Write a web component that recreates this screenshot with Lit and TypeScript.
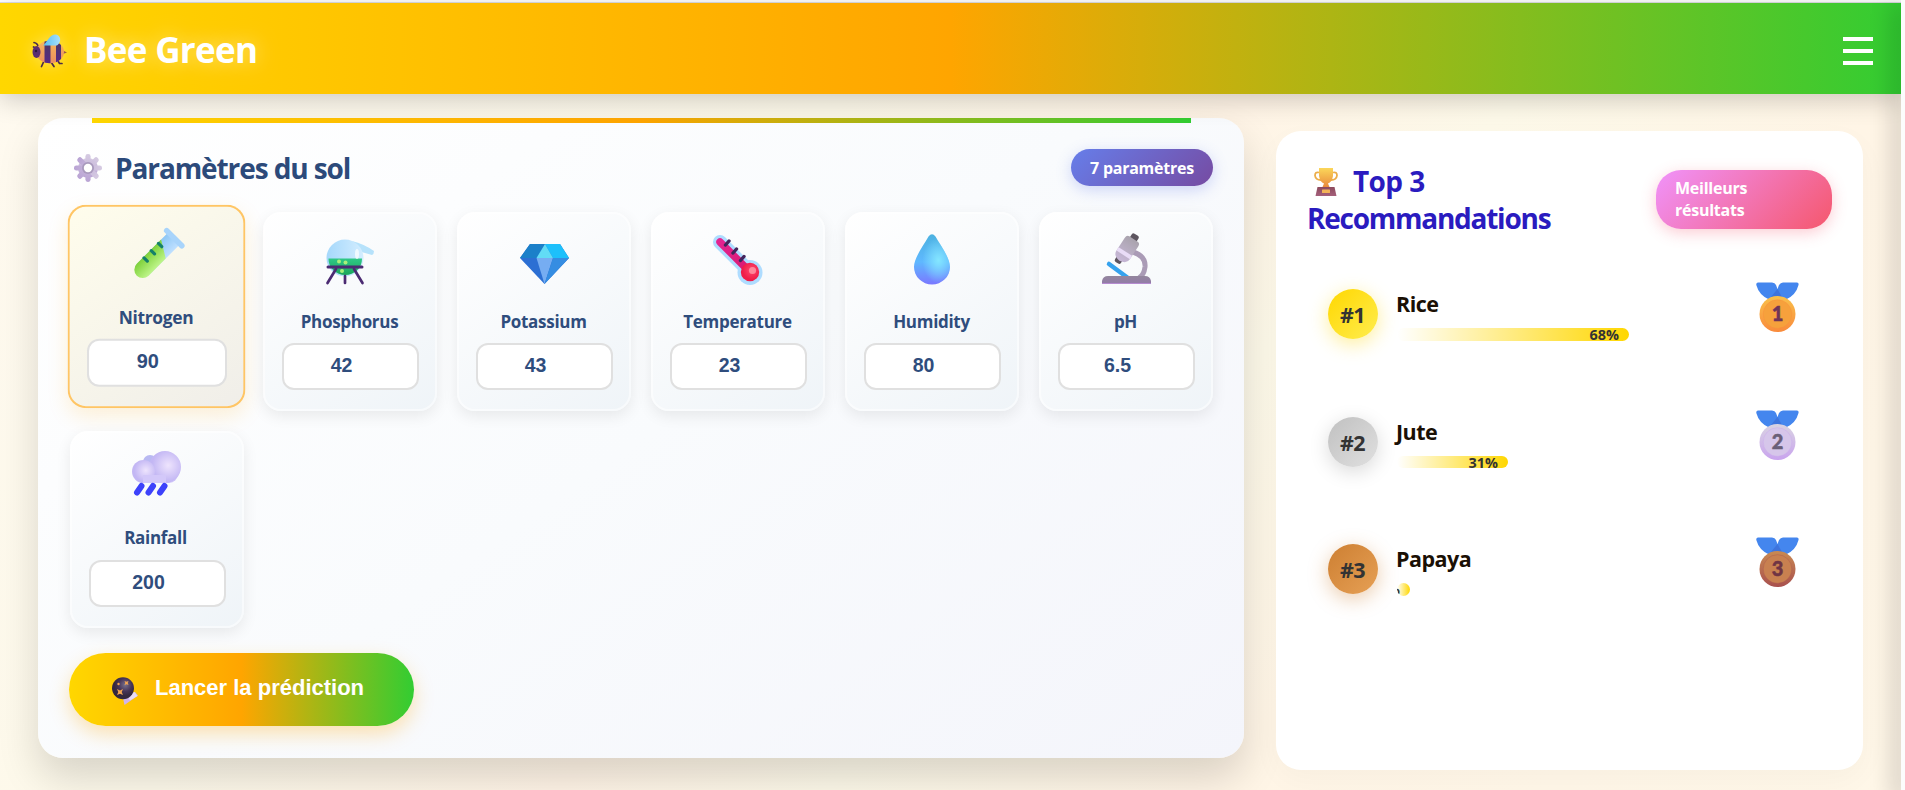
import { LitElement, html, svg, css } from "lit";
import { customElement } from "lit/decorators.js";

const lg = (id: string, a: string, b: string, x2 = 0, y2 = 1) =>
  svg`<linearGradient id=${id} x1="0" y1="0" x2=${x2} y2=${y2}><stop offset="0" stop-color=${a}/><stop offset="1" stop-color=${b}/></linearGradient>`;

const icons: Record<string, any> = {
  bee: svg`<defs>${lg("by", "#f9c25a", "#e8825f")}${lg("bd", "#4a3a5c", "#5a2590")}<linearGradient id="bw"><stop offset="0" stop-color="#54bdf2"/><stop offset="1" stop-color="#a9e0fa"/></linearGradient><clipPath id="bc"><ellipse cx="18" cy="18" rx="14" ry="11.200"/></clipPath></defs>
    <path d="M7 15Q6 9 2 8.500M4 14L1.500 13M12 27L9.500 32.500M19 28L22 32.500M26 27L27.500 29.500L30 29.500" stroke="#4a2d49" stroke-width="1.700" fill="none" stroke-linecap="round"/>
    <path d="M31 16.500L35 18.500L31 20Z" fill="#9c5a48"/>
    <g clip-path="url(#bc)"><rect width="36" height="36" fill="url(#by)"/><path d="M12.500 4h6v30h-6zM24 4h5v30h-5z" fill="url(#bd)"/></g>
    <ellipse cx="4.500" cy="18" rx="4" ry="6" fill="#5a2d72"/><circle cx="4" cy="17" r="1.200" fill="#2c173e"/>
    <path d="M11 11.500C15 9 17 1 23 .5C29 .5 30 8 25 11.500Z" fill="url(#bw)"/>`,
  gear: svg`<defs>${lg("gg", "#d6cbe2", "#b9a3d4")}</defs>
    <g fill="url(#gg)"><circle cx="14" cy="14" r="10"/>${[0, 45, 90, 135].map((a) => svg`<rect x="11.400" y="0" width="5.200" height="28" rx="2.400" transform="rotate(${a} 14 14)"/>`)}</g>
    <circle cx="14" cy="14" r="6" fill="#a99abd"/><circle cx="14" cy="14" r="4.200" fill="#fff"/>`,
  tube: svg`<defs>${lg("tg", "#7ed13a", "#bff58a", 1, 0)}${lg("tb", "#8ec7f5", "#bfe0ff", 1, 0)}</defs>
    <g transform="translate(25 25) scale(.91) rotate(45) translate(-25 -25)"><path d="M16 -1H34V45A9 9 0 0 1 16 45Z" fill="url(#tb)"/><path d="M16 9L34 20V46A9 9 0 0 1 16 46Z" fill="url(#tg)"/><rect x="10.500" y="-5" width="29" height="6" rx="3" fill="#a8d4fb"/>
    <path d="M17 14h5M17 25h5M17 36h5" stroke="#14806a" stroke-width="3.400" stroke-linecap="round"/></g>`,
  alembic: svg`<defs>${lg("ag", "#2fc887", "#1ba55a")}${lg("ab", "#a5d8fb", "#d3edff", 1, 0)}</defs>
    <path d="M26 2Q38 5 48 12Q48 15 46 16L32 12Z" fill="#b6e2fb"/><circle cx="19" cy="19" r="18.500" fill="url(#ab)"/>
    <path d="M2.500 19.500H36V20A16.750 16 0 0 1 2.500 20Z" fill="url(#ag)"/><path d="M10 30L1.500 44M19 37V44M28 30L36.500 44" stroke="#4b2b72" stroke-width="2.700" stroke-linecap="round"/><path d="M2 28H36" stroke="#4b2b72" stroke-width="3" stroke-linecap="round"/>
    <circle cx="13" cy="22.500" r="2" fill="#a9ef7a"/><circle cx="19.500" cy="23.500" r="2" fill="#a9ef7a"/><circle cx="16" cy="32" r="2" fill="#a9ef7a"/><ellipse cx="31" cy="15" rx="2" ry="5" fill="#fff" opacity=".7"/>`,
  gem: svg`<path d="M10 0H40L49 14L24.500 40L0 14Z" fill="#2c6fd3"/><path d="M10 0H25L16.500 14H0Z" fill="#1b80c9"/><path d="M25 0H40L49 14H33Z" fill="#1dc0fb"/><path d="M25 0L33 14H16.500Z" fill="#62dcf5"/><path d="M16.500 14H33L24.500 40Z" fill="#76adf2"/><path d="M33 14H49L24.500 40Z" fill="#358de2"/>`,
  thermo: svg`<defs>${lg("hr", "#e42391", "#d91b72", 1, 1)}<radialGradient id="hb" cx=".6" cy=".4"><stop offset="0" stop-color="#ff4a70"/><stop offset="1" stop-color="#f01d48"/></radialGradient></defs>
    <path d="M7 7L36 36" stroke="#aedcff" stroke-width="14" stroke-linecap="round"/><circle cx="37" cy="37.500" r="12.500" fill="#aedcff"/><path d="M7 7L34 34" stroke="url(#hr)" stroke-width="7.500" stroke-linecap="round"/><circle cx="37" cy="37" r="9.200" fill="url(#hb)"/><path d="M16 6L12.500 10M23.500 14L20 18M31 21.500L27.500 25.500" stroke="#42245c" stroke-width="3.400" stroke-linecap="round"/><circle cx="39.500" cy="35.500" r="3.600" fill="#ff9aa8" opacity=".8"/>`,
  drop: svg`<defs><linearGradient id="dg" x1="0" y1="0" x2="0" y2="1"><stop offset="0" stop-color="#4cb2e0"/><stop offset=".55" stop-color="#5fb8ff"/><stop offset="1" stop-color="#7a78ff"/></linearGradient><radialGradient id="dh" cx=".68" cy=".52" r=".45"><stop offset="0" stop-color="#84e6ff"/><stop offset="1" stop-color="#84e6ff" stop-opacity="0"/></radialGradient></defs>
    ${["url(#dg)", "url(#dh)"].map((f) => svg`<path d="M14.500 2.500Q18 -2 21.500 2.500C27 12 36 24 36 33A18 17.500 0 0 1 0 33C0 24 9 12 14.500 2.500Z" fill=${f}/>`)}`,
  scope: svg`<defs>${lg("sg", "#93869d", "#937ba9")}${lg("sb", "#a9a3ad", "#c8b8d8")}</defs>
    <path d="M31 17Q44 21 43 32Q42 40 37 43" fill="none" stroke="#aa9bb6" stroke-width="5"/><path d="M7 29L26 43" stroke="#35a2ee" stroke-width="4.500" stroke-linecap="round"/>
    <path d="M0 49V46Q1 41 6 41H43Q48 41 49 46V49Z" fill="url(#sg)"/><path d="M0 48.500H49" stroke="#b58bd0" stroke-width="1"/>
    <g transform="rotate(33 25 14)"><rect x="21" y="-3" width="8" height="7" rx="2" fill="#5d555f"/><rect x="20.500" y="24" width="7" height="7" rx="2" fill="#5d555f"/><path d="M17 6Q17 2 20 2H30Q33 2 33 6V21Q33 27 25 28Q17 27 17 21Z" fill="url(#sb)"/><path d="M17 17H33V21H17Z" fill="#e9dcf7"/></g>`,
  rain: svg`<defs><radialGradient id="rc" cx=".6" cy=".45"><stop offset="0" stop-color="#eee4fd"/><stop offset="1" stop-color="#c3b7f4"/></radialGradient></defs>
    <circle cx="18" cy="11" r="7" fill="#b9b9f2"/><rect x="3" y="14" width="43" height="18" rx="9" fill="#cfc4f8"/><circle cx="33" cy="16" r="16" fill="url(#rc)"/><circle cx="11.500" cy="20.500" r="11.500" fill="url(#rc)"/><path d="M11 24H34V32H11Z" fill="#d3c8f9"/>
    <path d="M9.500 35L5 41.500M21 35L16.500 41.500M32.500 35L28 41.500" stroke="#3d42fb" stroke-width="6" stroke-linecap="round"/>`,
  ball: svg`<defs><radialGradient id="cb" cx=".6" cy=".35"><stop offset="0" stop-color="#77708c"/><stop offset=".6" stop-color="#463457"/><stop offset="1" stop-color="#33273e"/></radialGradient></defs>
    <path d="M11 21L23 15L26 18.500L12.500 28Z" fill="#cfb4ed"/><path d="M15 17.500L22.500 15L25.500 19L18 23.500Z" fill="#e9dcf7"/><circle cx="11" cy="11.200" r="11" fill="url(#cb)"/>
    <path d="M5 12l3 1.500 3-1.500-1.300 3 1.300 3-3-1.200-3 1.200 1.300-3zM12.500 4l2 .8 2-.8-.8 2 .8 2-2-.8-2 .8.8-2z" fill="#f4a552"/><circle cx="6.500" cy="7" r="1.200" fill="#f4a552"/>`,
  cup: svg`<defs>${lg("ug", "#fbd75a", "#e98a3c", 0, 1)}${lg("ub", "#8c4a5c", "#a5607c")}</defs>
    <path d="M5 4.500Q1 3.500 1 7.500Q1.500 12 7 12M19 4.500Q23 3.500 23 7.500Q22.500 12 17 12" fill="none" stroke="#ecae4a" stroke-width="1.800"/><path d="M5 0H19V8Q18 14 14 15.500L15.500 19H8.500L10 15.500Q6 14 5 8Z" fill="url(#ug)"/>
    <path d="M3.500 19H20.500L22.500 28H1.500Z" fill="url(#ub)"/><rect x="8" y="21.500" width="8" height="3.500" rx=".5" fill="#f3b358"/>`,
};

const icon = (name: string, w: number, h: number) =>
  html`<svg width=${w} height=${h} viewBox="0 0 ${w} ${h}">${icons[name]}</svg>`;

const medals = [
  ["#f9c04a", "#f98a3c", "#f6a13c", "#6f3457"],
  ["#d9d3e2", "#c9a4ee", "#d6c6ea", "#6a5f78"],
  ["#c98a52", "#a8504e", "#c88050", "#6f3444"],
];

const medal = (i: number) => {
  const [a, b, c, d] = medals[i];
  return html`<svg width="43" height="50" viewBox="0 0 43 50">
    <defs>${lg("m" + i, a, b)}</defs>
    <path d="M2 .5H16Q19 .5 20 3L21.500 7L23 3Q24.500 .5 27 .5H41Q43 .5 42.500 3Q40 13 30 17.500H13Q3 13 .3 3Q0 .5 2 .5Z" fill="#4486ee"/>
    <path d="M21.500 7L26 15L13 17.500Z" fill="#3e74dd"/>
    <circle cx="21.500" cy="32" r="18" fill="url(#m${i})"/><circle cx="21.500" cy="32" r="14.300" fill=${c} stroke=${b} stroke-opacity=".35"/>
    <text x="21.500" y="39" text-anchor="middle" font-family="Lato, sans-serif" font-weight="900" font-size="20" fill=${d} stroke=${d} stroke-width=".5">${i + 1}</text>
  </svg>`;
};

const params = [
  { name: "Nitrogen", value: "90", icon: "tube", w: 50, h: 50, b: 73 },
  { name: "Phosphorus", value: "42", icon: "alembic", w: 49, h: 45, b: 70 },
  { name: "Potassium", value: "43", icon: "gem", w: 49, h: 40, b: 70 },
  { name: "Temperature", value: "23", icon: "thermo", w: 50, h: 50, b: 71 },
  { name: "Humidity", value: "80", icon: "drop", w: 36, h: 50, b: 70 },
  { name: "pH", value: "6.5", icon: "scope", w: 49, h: 49, b: 70 },
  { name: "Rainfall", value: "200", icon: "rain", w: 49, h: 45, b: 63 },
];

const crops = [
  { name: "Rice", pct: "68%", width: 232 },
  { name: "Jute", pct: "31%", width: 111 },
  { name: "Papaya", pct: "1%", width: 13 },
];

@customElement("app-root")
export class AppRoot extends LitElement {
  static styles = css`
    :host { display: block; height: 790px; overflow: hidden; background: #fcfcfc; font-family: "Open Sans", "Noto Sans", sans-serif; }
    * { box-sizing: border-box; }
    svg { display: block; flex: none; overflow: visible; }
    .page { width: 1901px; height: 790px; position: relative; overflow: hidden; display: flex; flex-direction: column;
      background: linear-gradient(135deg, #fffaf0 0%, #fdf9ea 35%, #fff4e6 50%, #fdf9e9 60%, #fff5e6 74%, #fff7e8 100%); }
    .page::after { content: ""; position: absolute; top: 3px; right: -10px; width: 10px; height: 800px; box-shadow: -5px 0 25px rgba(0,0,0,.3); z-index: 5; }
    .edge { height: 3px; background: #fff; border-bottom: 1px solid #dedfe4; flex: none; }
    header { height: 91px; flex: none; display: flex; align-items: center; padding: 0 28px 0 32px; background: linear-gradient(90deg, #ffd700, #ffa500 50%, #32cd32);
      box-shadow: 0 5px 25px rgba(0,0,0,.2); position: relative; z-index: 2; }
    header svg { filter: drop-shadow(0 0 8px rgba(255,255,255,.35)); margin-top: 3px; }
    h1 { margin: 2px auto 0 16px; font-size: 35px; line-height: 44px; color: #fff; letter-spacing: -.7px; text-shadow: 0 0 20px rgba(255,255,255,.5); }
    .menu { display: grid; gap: 8px; margin-top: 5px; }
    .menu i { width: 30px; height: 4px; background: #fff; }
    main { display: flex; align-items: flex-start; padding: 24px 38px; gap: 32px; }
    .soil { width: 1206px; height: 640px; border-radius: 25px; background: linear-gradient(145deg, #fff, #f9fbfd 50%, #f4f5fb); box-shadow: 0 20px 40px rgba(0,0,0,.15); padding: 0 31px; display: flex; flex-direction: column; }
    .stripe { height: 5px; margin: 0 22.500px 0 23px; background: linear-gradient(90deg, #ffd700, #ffa500 50%, #32cd32); flex: none; }
    .head { display: flex; align-items: center; justify-content: space-between; height: 89px; padding: 0 0 0 5px; flex: none; }
    h2 { margin: 0; font-size: 28px; line-height: 37px; color: #2c4a7a; font-weight: 700; }
    .head h2 { display: flex; align-items: center; gap: 13px; letter-spacing: -1.100px; }
    .head h2 span { position: relative; top: 1px; }
    .badge { color: #fff; font-weight: 700; font-size: 16px; letter-spacing: -.25px; }
    .b1 { width: 142px; height: 37px; margin-top: -1px; line-height: 38px; border-radius: 19px; text-align: center; background: linear-gradient(135deg, #667eea, #764ba2); box-shadow: 0 4px 15px rgba(102,126,234,.3); }
    .grid { display: grid; grid-template-columns: repeat(6, 174px); grid-template-rows: 198.500px 197px; gap: 20.500px 20px; }
    .card { border-radius: 18px; background: linear-gradient(145deg, #fff, #eff4f8); box-shadow: 0 5px 15px rgba(0,0,0,.08), inset 0 0 0 2px rgba(255,255,255,.5);
      display: flex; flex-direction: column; align-items: center; padding-top: 2px; }
    .card.on { transform: translate(.5px, -5px) scale(1.022); background: linear-gradient(145deg, #fffdec, #f0eee9); box-shadow: 0 8px 20px rgba(255,165,0,.15), inset 0 0 0 2px #ffc564; }
    .card:last-child { position: relative; left: 1px; }
    .pic { height: 90px; display: flex; align-items: flex-end; flex: none; }
    .label { height: 39px; line-height: 35px; font-size: 17px; font-weight: 700; color: #2f4d7d; letter-spacing: -.3px; margin-left: -1px; }
    .on .label { line-height: 37px; }
    .card:last-child .pic { height: 86px; }
    .card:last-child .label { height: 41px; line-height: 37px; margin-left: -3px; }
    .card:last-child .pic svg { margin-left: -2px; }
    .field { width: 137px; height: 47px; margin-left: 1px; border: 2px solid #e0e0e0; border-radius: 12px; background: #fff; text-align: center; padding-right: 18px;
      font: 700 19.500px/41px "Liberation Sans", sans-serif; color: #2f4d7d; }
    .go { width: 345px; height: 73px; margin-top: 24.500px; border-radius: 37px; display: flex; align-items: center; padding: 0 0 0 43px; gap: 17px; flex: none;
      background: linear-gradient(90deg, #ffd700, #ffa500 50%, #32cd32); box-shadow: 0 8px 20px rgba(255,165,0,.3); color: #fff; font: 700 22px/30px "Liberation Sans", sans-serif; }
    .go svg { margin-top: 3px; }
    .go span { margin-top: -2px; }
    .top { width: 587px; height: 639px; margin-top: 13px; border-radius: 25px; background: #fff; padding: 32px 31px 0 32px; box-shadow: 0 10px 30px rgba(0,0,0,.03); }
    .tophead { display: flex; justify-content: space-between; height: 73px; }
    .tophead h2 { color: #2a1bbf; letter-spacing: -1.250px; margin-left: -1px; }
    .tophead h2 div { display: flex; align-items: center; gap: 15px; padding-left: 7px; height: 37px; letter-spacing: -.6px; }
    .b2 { width: 176px; height: 59px; margin-top: 7px; border-radius: 25px; padding: 7px 19px 0; line-height: 22px; background: linear-gradient(135deg, #f093fb, #f5576c); box-shadow: 0 4px 15px rgba(245,87,108,.3); }
    .rows { padding-top: 46px; }
    .row { display: flex; height: 127.500px; align-items: flex-start; padding: 0 33px 0 20px; }
    .rank { width: 50px; height: 50px; margin-top: 7px; border-radius: 50%; font-size: 21.500px; font-weight: 700; line-height: 51px; text-align: center; color: #333; flex: none; letter-spacing: -.6px; text-indent: -1px; }
    .r0 { background: linear-gradient(135deg, #ffd700, #ffed4e); box-shadow: 0 5px 20px rgba(255,215,0,.4); }
    .r1 { background: linear-gradient(135deg, #c0c0c0, #e0e0e0); box-shadow: 0 5px 20px rgba(0,0,0,.15); }
    .r2 { background: linear-gradient(135deg, #cd7f32, #e6a055); box-shadow: 0 5px 20px rgba(205,127,50,.4); }
    .info { margin-left: 18px; flex: 1; }
    .name { font-size: 21.500px; font-weight: 700; line-height: 30px; margin-top: 7px; height: 39px; color: #1a1005; letter-spacing: -.5px; }
    .bar { height: 12.500px; margin-left: 1px; border-radius: 7px; background: linear-gradient(90deg, rgba(255,215,0,0), #ffd700); display: flex; justify-content: flex-end; padding-right: 10px; overflow: hidden;
      font-size: 14.400px; line-height: 14px; font-weight: 700; color: #333; }
  `;

  render() {
    return html`<div class="page">
      <div class="edge"></div>
      <header>${icon("bee", 36, 33)}<h1>Bee Green</h1><div class="menu"><i></i><i></i><i></i></div></header>
      <main>
        <section class="soil">
          <div class="stripe"></div>
          <div class="head"><h2>${icon("gear", 28, 28)}<span>Paramètres du sol</span></h2><span class="badge b1">7 paramètres</span></div>
          <div class="grid">
            ${params.map((p, i) => html`<div class="card ${i === 0 ? "on" : ""}">
              <div class="pic" style="padding-bottom:${(i === 6 ? 84 : 88) + 2 - p.b}px">${icon(p.icon, p.w, p.h)}</div>
              <div class="label">${p.name}</div>
              <div class="field">${p.value}</div>
            </div>`)}
          </div>
          <div class="go">${icon("ball", 26, 28)}<span>Lancer la prédiction</span></div>
        </section>
        <section class="top">
          <div class="tophead">
            <h2><div>${icon("cup", 24, 28)}<span>Top 3</span></div><span>Recommandations</span></h2>
            <div class="badge b2">Meilleurs<br />résultats</div>
          </div>
          <div class="rows">
            ${crops.map((c, i) => html`<div class="row">
              <div class="rank r${i}">#${i + 1}</div>
              <div class="info"><div class="name">${c.name}</div><div class="bar" style="width:${c.width}px"><span>${c.pct}</span></div></div>
              ${medal(i)}
            </div>`)}
          </div>
        </section>
      </main>
    </div>`;
  }
}
